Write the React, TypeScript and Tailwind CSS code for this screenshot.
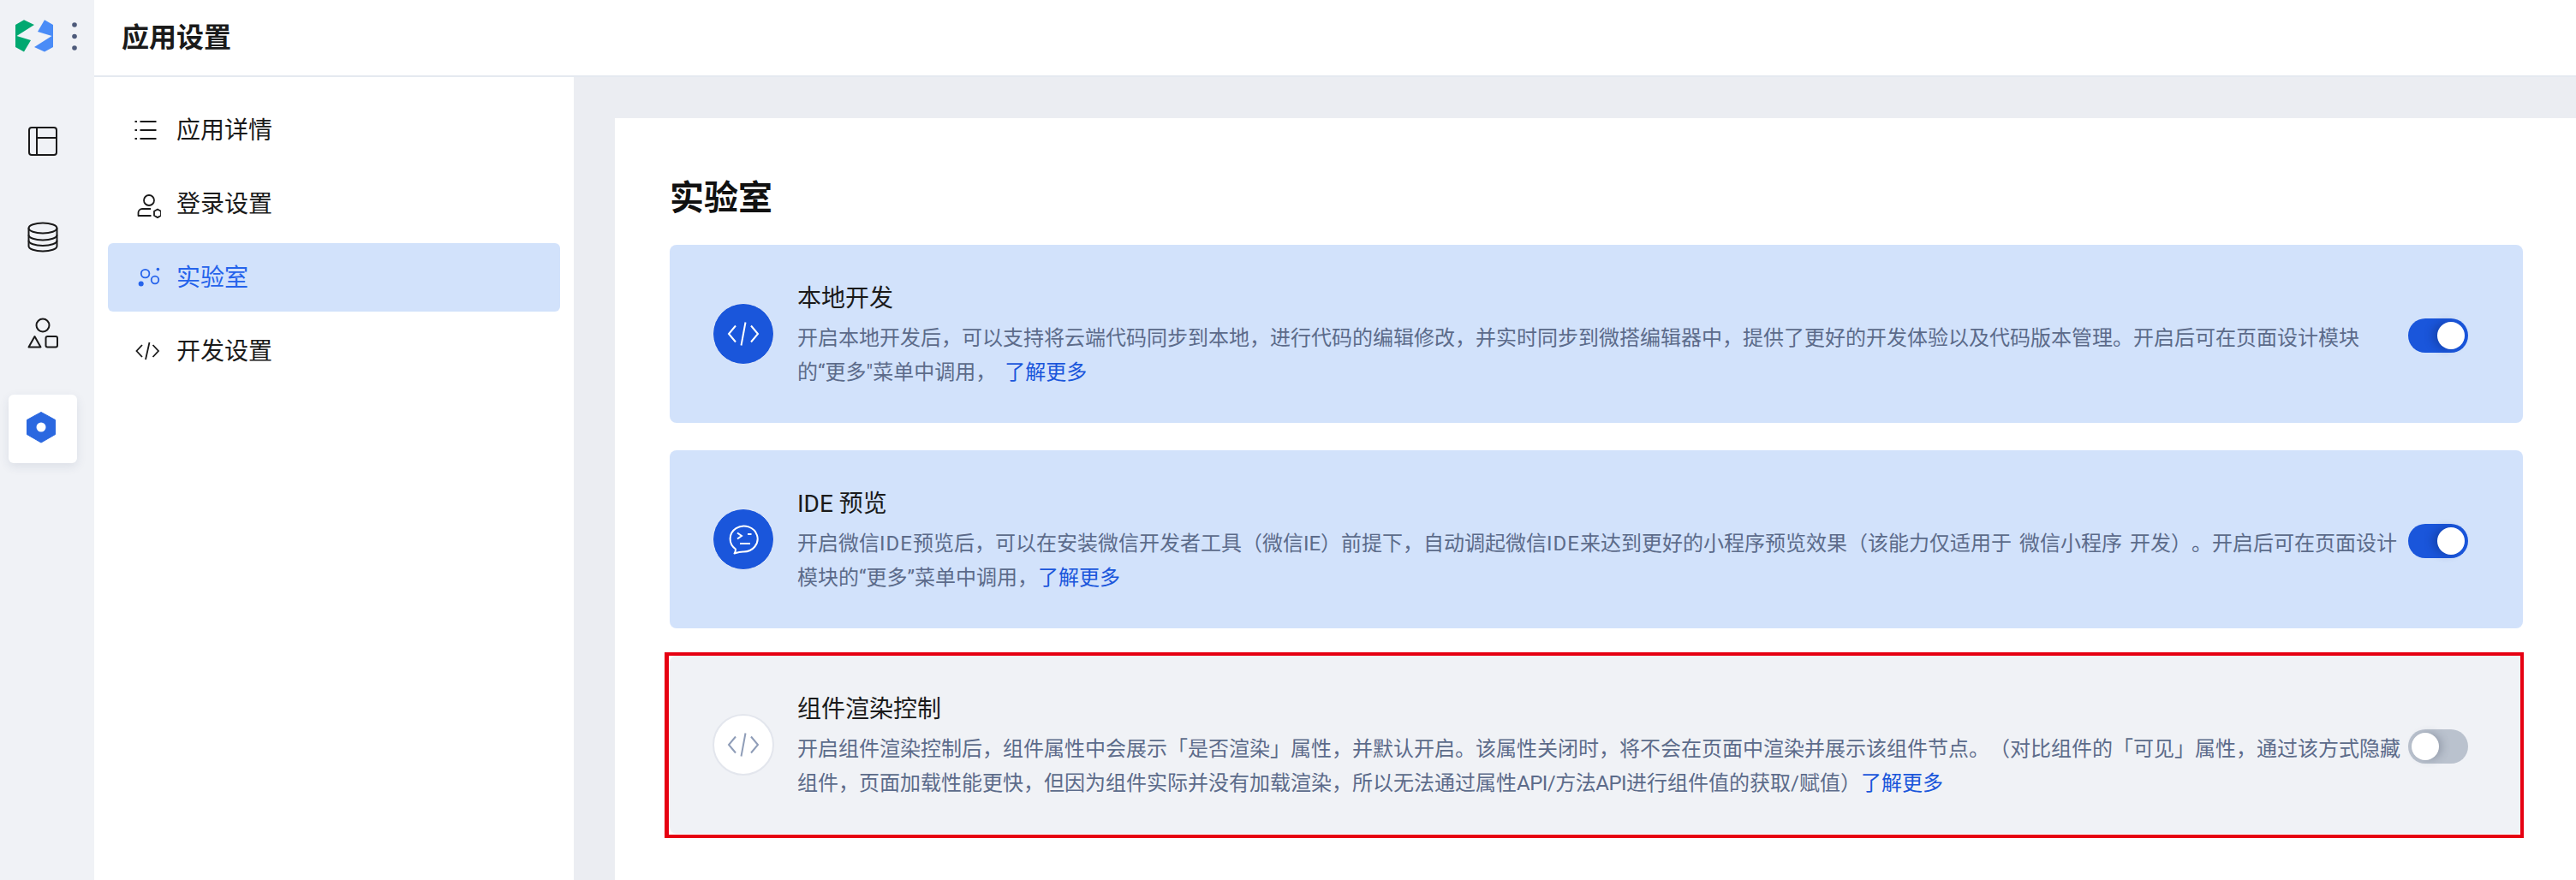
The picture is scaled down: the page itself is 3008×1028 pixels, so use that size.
const navItems = [
  { id: 'detail', label: '应用详情' },
  { id: 'login', label: '登录设置' },
  { id: 'lab', label: '实验室' },
  { id: 'dev', label: '开发设置' },
];

const NavIcon = ({ id }: { id: string }) => {
  switch (id) {
    case 'detail':
      return (
        <svg width="32" height="32" viewBox="0 0 32 32" fill="none" stroke="currentColor" strokeWidth="2">
          <path d="M1.5 6h2.5M1.5 16h2.5M1.5 26h2.5M7.500 6h19M7.500 16h19M7.500 26h19" />
        </svg>
      );
    case 'login':
      return (
        <svg width="32" height="32" viewBox="0 0 32 32" fill="none" stroke="currentColor" strokeWidth="1.800" className="mt-[3px]">
          <circle cx="18" cy="10" r="6" />
          <path d="M20 20h-10a4.500 4.500 0 0 0-4.500 4.500v3.500h15" strokeLinejoin="round" />
          <path d="M28 20.500l4 2.300v5l-4 2.300-4-2.300v-5z" strokeLinejoin="round" />
        </svg>
      );
    case 'lab':
      return (
        <svg width="32" height="32" viewBox="0 0 32 32" fill="none" stroke="currentColor" strokeWidth="1.800">
          <circle cx="13.600" cy="11.600" r="4.800" />
          <circle cx="25" cy="19" r="4.300" />
          <circle cx="8.700" cy="23.400" r="3" fill="currentColor" stroke="none" />
          <circle cx="28.400" cy="6.600" r="1.800" fill="currentColor" stroke="none" />
        </svg>
      );
    default:
      return (
        <svg width="32" height="32" viewBox="0 0 32 32" fill="none" stroke="currentColor" strokeWidth="1.800">
          <path d="M10 9l-6.500 7 6.500 7M22.500 9l6.500 7-6.500 7M18.500 6l-4.500 20" />
        </svg>
      );
  }
};

const CodeIcon = ({ className }: { className: string }) => (
  <svg width="40" height="32" viewBox="0 0 40 32" fill="none" stroke="currentColor" strokeWidth="2" className={className}>
    <path d="M11 6.500L3 16l8 9.500M29 6.500L37 16l-8 9.500M22.500 2.500L17.500 29.500" />
  </svg>
);

const BubbleIcon = () => (
  <svg width="40" height="36" viewBox="0 0 40 36" fill="none" stroke="currentColor" strokeWidth="2" className="text-white">
    <path d="M11 29.500A16 15 0 1 1 20 32.500c-2.500 0-5 .2-10.500 2 1.200-1.500 1.500-3.300 1.500-5z" strokeLinejoin="round" />
    <path d="M13 10.500l5 3.500-5 3.500M25 12h4.500M16 23h12" />
  </svg>
);

const Toggle = ({ on }: { on: boolean }) => (
  <div
    className={
      on
        ? 'mt-[3px] flex h-[40px] w-[70px] shrink-0 items-center justify-end rounded-full bg-[#1a56db] px-[4px]'
        : 'mt-[3px] flex h-[40px] w-[70px] shrink-0 items-center justify-start rounded-full bg-[#bac2ce] px-[4px]'
    }
  >
    <div
      className={
        on
          ? 'h-[32px] w-[32px] rounded-full bg-white shadow-[-6px_0_10px_rgba(15,40,110,0.35)]'
          : 'h-[32px] w-[32px] rounded-full bg-white shadow-[4px_0_10px_rgba(70,80,100,0.3)]'
      }
    />
  </div>
);

const More = ({ className = '' }: { className?: string }) => <span className={`text-[#1a56db] ${className}`}>了解更多</span>;

const Ide = () => <span className="tracking-[1px]">IDE</span>;

const FeatureCard = ({
  title,
  icon,
  active,
  line1,
  line2,
  on,
}: {
  title: string;
  icon: React.ReactNode;
  active: boolean;
  line1: React.ReactNode;
  line2: React.ReactNode;
  on: boolean;
}) => (
  <div
    className={
      active
        ? 'flex h-[208px] items-center rounded-[8px] bg-[#d2e2fb] pl-[50px] pr-[64px]'
        : 'flex h-[208px] items-center rounded-[8px] bg-[#f0f2f6] pl-[50px] pr-[64px]'
    }
  >
    <div
      className={
        active
          ? 'flex h-[72px] w-[72px] shrink-0 items-center justify-center rounded-full border border-[#e4ebf8] bg-[#1a56db]'
          : 'flex h-[72px] w-[72px] shrink-0 items-center justify-center rounded-full border-2 border-[#e3e6ed] bg-white'
      }
    >
      {icon}
    </div>
    <div className="ml-[27px] mt-[3px] min-w-0 flex-1">
      <div className="mb-[6px] text-[28px] leading-[40px] text-[#1a1a1a]">{title}</div>
      <div className="whitespace-nowrap text-[24px] leading-[40px] text-[#5c6b8a] [word-spacing:3px]">
        <div>{line1}</div>
        <div>{line2}</div>
      </div>
    </div>
    <Toggle on={on} />
  </div>
);

export default function App() {
  return (
    <div className="flex h-[1028px] w-[3008px] overflow-hidden bg-white [font-family:Roboto,'Noto_Sans_CJK_SC',sans-serif] [text-spacing-trim:space-all]">
      {/* left rail */}
      <aside className="flex w-[110px] shrink-0 flex-col bg-[#f0f2f6]">
        <div className="flex h-[88px] w-full items-center">
          <svg width="110" height="88" viewBox="0 0 110 88">
            <path d="M28 23.300L40 29 19.500 42 36 47 28 60.600 18 55V29z" fill="#00a870" />
            <path d="M52 23.300L62 29V55L52 60.600 40 55 60.500 42 44 37z" fill="#4a8cf7" />
            <circle cx="87" cy="29" r="2.800" fill="#4d5a7a" />
            <circle cx="87" cy="42.500" r="2.800" fill="#4d5a7a" />
            <circle cx="87" cy="56" r="2.800" fill="#4d5a7a" />
          </svg>
        </div>
        <div className="ml-[10px] mt-[37px] flex flex-col gap-[32px] text-[#1a1a1a]">
          <div className="flex h-[80px] w-[80px] items-center justify-center">
            <svg width="36" height="36" viewBox="0 0 36 36" fill="none" stroke="currentColor" strokeWidth="2">
              <rect x="2" y="2" width="32" height="32" rx="3" />
              <path d="M11 2v32M11 14h23" />
            </svg>
          </div>
          <div className="flex h-[80px] w-[80px] items-center justify-center">
            <svg width="36" height="36" viewBox="0 0 36 36" fill="none" stroke="currentColor" strokeWidth="2">
              <ellipse cx="18" cy="7.500" rx="16.500" ry="6" />
              <path d="M1.500 7.500V28.500C1.500 32 9 34.500 18 34.500S34.500 32 34.500 28.500V7.500" />
              <path d="M1.500 15.500C1.500 19 9 21.500 18 21.500S34.500 19 34.500 15.500M1.500 22C1.500 25.500 9 28 18 28S34.500 25.500 34.500 22" />
            </svg>
          </div>
          <div className="flex h-[80px] w-[80px] items-center justify-center">
            <svg width="36" height="36" viewBox="0 0 36 36" fill="none" stroke="currentColor" strokeWidth="2">
              <circle cx="18" cy="9" r="7.500" />
              <path d="M8.500 22L15.500 34.500H1.500z" strokeLinejoin="round" />
              <rect x="21.500" y="22" width="13.500" height="12.500" rx="2" />
            </svg>
          </div>
          <div className="flex h-[80px] w-[80px] items-center justify-center rounded-[6px] bg-white shadow-[0_4px_12px_rgba(40,60,100,0.1)]">
            <svg width="40" height="40" viewBox="0 0 40 40">
              <path d="M18 0.500L34.500 9.500V26.500L18 36 1.500 26.500V9.500z" fill="#2b68e0" stroke="#2b68e0" strokeLinejoin="round" />
              <circle cx="18" cy="18" r="5.500" fill="white" />
            </svg>
          </div>
        </div>
      </aside>

      <div className="flex min-w-0 flex-1 flex-col">
        <header className="flex h-[90px] shrink-0 items-center border-b-2 border-[#e5e9f0] pl-[32px]">
          <span className="text-[32px] font-semibold text-[#1a1a1a]">应用设置</span>
        </header>

        <div className="flex min-h-0 flex-1">
          {/* settings menu */}
          <nav className="flex w-[560px] shrink-0 flex-col gap-[6px] bg-white pl-[16px] pr-[16px] pt-[22px]">
            {navItems.map(item => (
              <div
                key={item.id}
                className={
                  item.id === 'lab'
                    ? 'flex h-[80px] items-center gap-[18px] rounded-[6px] bg-[#d2e2fb] pl-[30px] text-[28px] text-[#2563eb]'
                    : 'flex h-[80px] items-center gap-[18px] rounded-[6px] pl-[30px] text-[28px] text-[#1a1a1a]'
                }
              >
                <NavIcon id={item.id} />
                <span className="mt-[2px]">{item.label}</span>
              </div>
            ))}
          </nav>

          <main className="min-w-0 flex-1 bg-[#ebedf2] pl-[48px] pt-[48px]">
            <div className="h-full bg-white pl-[64px] pr-[62px] pt-[66px]">
              <h1 className="mb-[26px] text-[40px] font-bold leading-[56px] text-[#111]">实验室</h1>
              <div className="flex flex-col gap-[32px]">
                <FeatureCard
                  active
                  on
                  title="本地开发"
                  icon={<CodeIcon className="text-white" />}
                  line1="开启本地开发后，可以支持将云端代码同步到本地，进行代码的编辑修改，并实时同步到微搭编辑器中，提供了更好的开发体验以及代码版本管理。开启后可在页面设计模块"
                  line2={
                    <>
                      的“更多"菜单中调用，
                      <More className="ml-[10px]" />
                    </>
                  }
                />
                <FeatureCard
                  active
                  on
                  title="IDE 预览"
                  icon={<BubbleIcon />}
                  line1={
                    <>
                      开启微信<Ide />预览后，可以在安装微信开发者工具（微信IE）前提下，自动调起微信<Ide />来达到更好的小程序预览效果（该能力仅适用于 微信小程序 开发）。开启后可在页面设计
                    </>
                  }
                  line2={
                    <>
                      模块的“更多”菜单中调用，
                      <More />
                    </>
                  }
                />
                <div className="relative">
                  <FeatureCard
                    active={false}
                    on={false}
                    title="组件渲染控制"
                    icon={<CodeIcon className="text-[#8f9db8]" />}
                    line1="开启组件渲染控制后，组件属性中会展示「是否渲染」属性，并默认开启。该属性关闭时，将不会在页面中渲染并展示该组件节点。（对比组件的「可见」属性，通过该方式隐藏"
                    line2={
                      <>
                        组件，页面加载性能更快，但因为组件实际并没有加载渲染，所以无法通过属性<span className="tracking-[-0.5px]">API/方法API</span>进行组件值的获取/赋值）
                        <More />
                      </>
                    }
                  />
                  {/* red annotation box from the screenshot */}
                  <div className="absolute -left-[6px] -top-[4px] h-[217px] w-[2171px] border-4 border-l-[5px] border-[#e60012]" />
                </div>
              </div>
            </div>
          </main>
        </div>
      </div>
    </div>
  );
}
